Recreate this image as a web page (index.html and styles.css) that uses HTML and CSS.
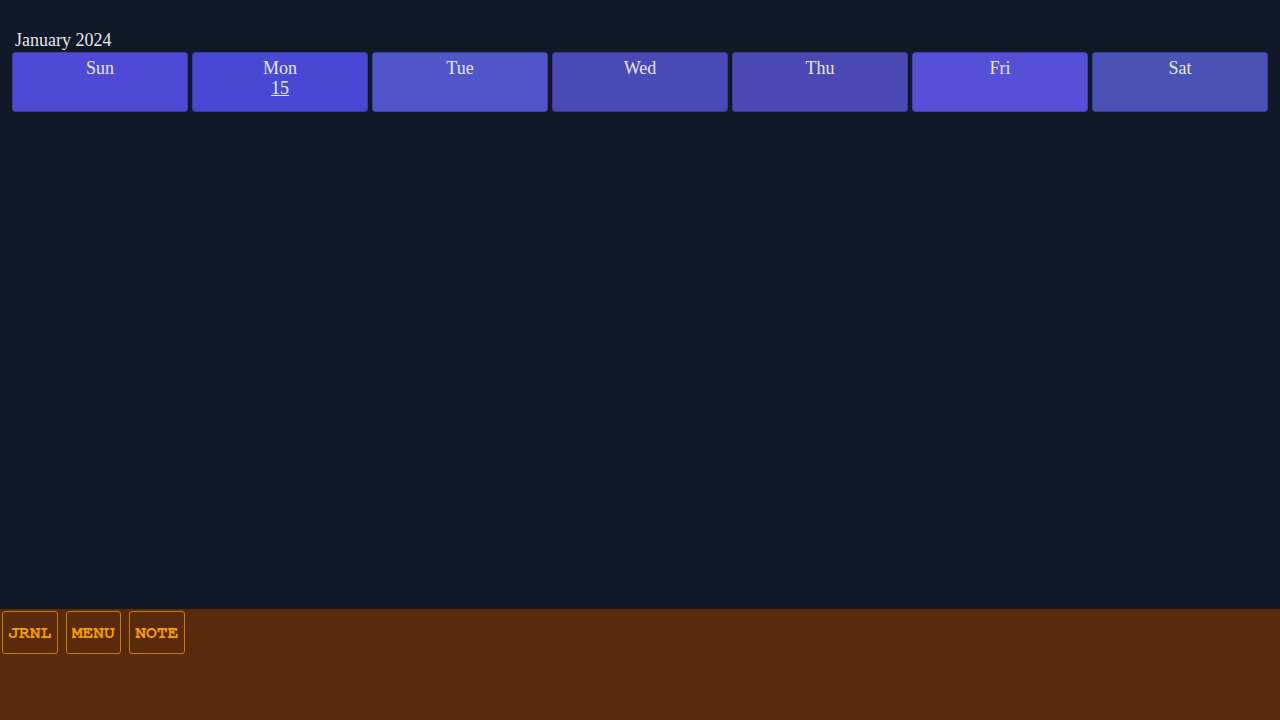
FILE: index.html
```html
<!DOCTYPE html>
<html>
<head>
<meta charset="utf-8">
<link rel="stylesheet" href="styles.css">
</head>
<body>
<div class="app">
  <main class="main">
    <div class="month">January 2024</div>
    <div class="week">
      <div class="day d-sun">Sun</div>
      <div class="day d-mon">Mon<br><a class="date" href="#">15</a></div>
      <div class="day d-tue">Tue</div>
      <div class="day d-wed">Wed</div>
      <div class="day d-thu">Thu</div>
      <div class="day d-fri">Fri</div>
      <div class="day d-sat">Sat</div>
    </div>
  </main>
  <footer class="dock">
    <button class="btn">JRNL</button>
    <button class="btn">MENU</button>
    <button class="btn">NOTE</button>
  </footer>
</div>
</body>
</html>
```

FILE: styles.css
```css
html, body {
  margin: 0;
  padding: 0;
  background: #111827;
  height: 100%;
}
.app {
  height: 720px;
  display: flex;
  flex-direction: column;
  font-family: "Liberation Serif", "Times New Roman", serif;
  color: #e5e7eb;
}
.main {
  flex: 1;
  padding: 30px 12px 0 12px;
}
.month {
  font-size: 18px;
  line-height: 20px;
  padding-left: 3px;
  margin-bottom: 2px;
}
.week {
  display: grid;
  grid-template-columns: repeat(7, 1fr);
  gap: 4px;
}
.day {
  height: 53px;
  border: 1px solid rgba(30, 30, 90, 0.35);
  border-radius: 4px;
  text-align: center;
  font-size: 18px;
  line-height: 20px;
  padding-top: 5px;
  box-sizing: content-box;
}
.date {
  color: #e5e7eb;
  text-decoration: underline;
}
.d-sun { background: #4f4ad6; }
.d-mon { background: #4848d4; }
.d-tue { background: #5055c8; }
.d-wed { background: #4a4ab6; }
.d-thu { background: #4a48b2; }
.d-fri { background: #564fd8; }
.d-sat { background: #4a52b6; }
.dock {
  height: 111px;
  background: #5a2a0c;
  display: flex;
  align-items: flex-start;
  gap: 8px;
  padding: 2px;
  box-sizing: border-box;
}
.btn {
  background: transparent;
  border: 1px solid rgba(245, 158, 11, 0.7);
  border-radius: 3px;
  color: #f59e0b;
  font-family: "Nimbus Mono PS", "Nimbus Mono L", FreeMono, Courier, "Liberation Mono", monospace;
  font-weight: bold;
  font-size: 18px;
  height: 43px;
  width: 55.5px;
  padding: 0;
  display: flex;
  align-items: center;
  justify-content: center;
}
```
